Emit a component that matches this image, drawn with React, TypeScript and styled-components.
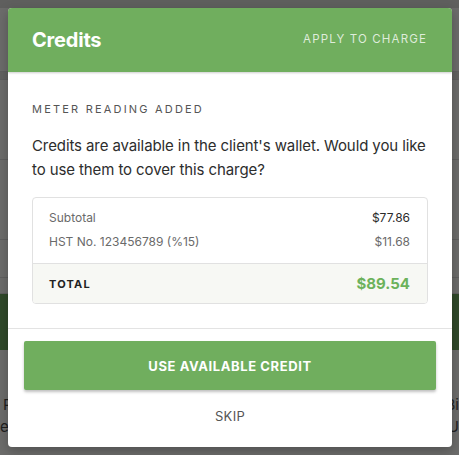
import React from "react";
import styled, { createGlobalStyle } from "styled-components";

const GlobalStyle = createGlobalStyle`
    html, body {
        margin: 0;
        padding: 0;
        width: 459px;
        height: 455px;
        overflow: hidden;
        font-family: Inter, "Liberation Sans", Arial, sans-serif;
    }
    * { box-sizing: border-box; }
`;

// Dimmed page behind the dialog
const Backdrop = styled.div`
    position: relative;
    width: 459px;
    height: 455px;
    background: #6c6c6b;
    display: flex;
    flex-direction: column;
`;

const PageTopBar = styled.div`
    height: 8px;
    flex-shrink: 0;
    background: #5f5f5e;
`;

const PageRow = styled.div<{ $height: number; $dark?: boolean }>`
    height: ${props => props.$height}px;
    flex-shrink: 0;
    border-bottom: 1px solid #5f5f5f;
    background: ${props => (props.$dark ? "#626261" : "transparent")};
`;

const PageBanner = styled.div`
    height: 56px;
    flex-shrink: 0;
    background: #30492a;
`;

const PageText = styled.div`
    display: flex;
    justify-content: space-between;
    padding-top: 44px;
    font-size: 15px;
    line-height: 22px;
    color: #1f1f1f;
`;

const PageTextCol = styled.div<{ $right?: boolean }>`
    display: flex;
    flex-direction: column;
    align-items: ${props => (props.$right ? "flex-end" : "flex-start")};
`;

const PageWord = styled.span<{ $indent?: number }>`
    margin-left: ${props => props.$indent || 0}px;
`;

// Dialog
const Overlay = styled.div`
    position: absolute;
    inset: 0;
    padding: 8px 7px 8px 8px;
    display: flex;
    align-items: flex-start;
`;

const Dialog = styled.div`
    width: 444px;
    height: 439px;
    background: #ffffff;
    border-radius: 4px;
    overflow: hidden;
    display: flex;
    flex-direction: column;
    box-shadow: 0 4px 12px rgba(0, 0, 0, 0.25);
`;

const Header = styled.div`
    height: 64px;
    flex-shrink: 0;
    background: #70ae5e;
    display: flex;
    align-items: center;
    justify-content: space-between;
    padding: 0 25px 0 24px;
    box-shadow: 0 1px 2px rgba(0, 0, 0, 0.2);
    position: relative;
    z-index: 1;
`;

const Title = styled.h1`
    margin: 0;
    font-size: 20px;
    font-weight: 700;
    color: #ffffff;
    letter-spacing: -0.2px;
`;

const HeaderAction = styled.span`
    font-size: 11.5px;
    letter-spacing: 1.15px;
    color: rgba(255, 255, 255, 0.78);
    text-transform: uppercase;
    margin-top: -2px;
`;

const Body = styled.div`
    padding: 30px 24px 24px 24px;
    border-bottom: 1px solid #e3e3e3;
`;

const Eyebrow = styled.div`
    font-size: 11px;
    letter-spacing: 2.2px;
    color: #555555;
    line-height: 14px;
    text-transform: uppercase;
`;

const Message = styled.p`
    margin: 18px 0 15px 0;
    font-size: 15px;
    line-height: 24px;
    color: #2d2d2d;
    letter-spacing: -0.1px;
`;

const Summary = styled.div`
    border: 1px solid #e1e1e1;
    border-radius: 4px;
    overflow: hidden;
`;

const SummaryLines = styled.div`
    padding: 8px 17px 9px 16px;
    display: flex;
    flex-direction: column;
`;

const Line = styled.div`
    display: flex;
    justify-content: space-between;
    font-size: 12px;
    line-height: 24px;
    color: #6a6a6a;
`;

const LineValue = styled.span<{ $strong?: boolean }>`
    color: ${props => (props.$strong ? "#2b2b2b" : "#6a6a6a")};
`;

const TotalRow = styled.div`
    height: 40px;
    border-top: 1px solid #e1e1e1;
    background: #f7f8f4;
    display: flex;
    align-items: center;
    justify-content: space-between;
    padding: 0 17px 0 16px;
`;

const TotalLabel = styled.span`
    font-size: 11px;
    font-weight: 700;
    letter-spacing: 1.2px;
    color: #222222;
`;

const TotalValue = styled.span`
    font-size: 15px;
    font-weight: 700;
    color: #6cb25b;
`;

const Footer = styled.div`
    padding: 12px 16px 0 16px;
    display: flex;
    flex-direction: column;
    align-items: stretch;
`;

const PrimaryButton = styled.button`
    height: 49px;
    border: none;
    border-radius: 2px;
    background: #70ae5e;
    color: #ffffff;
    font-family: inherit;
    font-size: 13px;
    font-weight: 700;
    letter-spacing: 0.6px;
    text-transform: uppercase;
    box-shadow: 0 2px 3px rgba(0, 0, 0, 0.25);
    cursor: pointer;
`;

const TextButton = styled.button`
    margin-top: 12px;
    height: 28px;
    border: none;
    background: transparent;
    color: #555555;
    font-family: inherit;
    font-size: 13px;
    letter-spacing: 0.3px;
    text-transform: uppercase;
    cursor: pointer;
`;

export default function App() {
    return (
        <>
            <GlobalStyle />
            <Backdrop>
                <PageTopBar />
                <PageRow $height={64} />
                <PageRow $height={8} $dark />
                <PageRow $height={80} />
                <PageRow $height={80} />
                <PageRow $height={38} />
                <PageRow $height={16} />
                <PageBanner />
                <PageText>
                    <PageTextCol>
                        <PageWord $indent={3}>P</PageWord>
                        <PageWord>ea</PageWord>
                    </PageTextCol>
                    <PageTextCol $right>
                        <PageWord>Bi</PageWord>
                        <PageWord>U</PageWord>
                    </PageTextCol>
                </PageText>
                <Overlay>
                    <Dialog>
                        <Header>
                            <Title>Credits</Title>
                            <HeaderAction>Apply to charge</HeaderAction>
                        </Header>
                        <Body>
                            <Eyebrow>Meter reading added</Eyebrow>
                            <Message>
                                Credits are available in the client's wallet. Would you like to use them to cover this charge?
                            </Message>
                            <Summary>
                                <SummaryLines>
                                    <Line>
                                        <span>Subtotal</span>
                                        <LineValue $strong>$77.86</LineValue>
                                    </Line>
                                    <Line>
                                        <span>HST No. 123456789 (%15)</span>
                                        <LineValue>$11.68</LineValue>
                                    </Line>
                                </SummaryLines>
                                <TotalRow>
                                    <TotalLabel>TOTAL</TotalLabel>
                                    <TotalValue>$89.54</TotalValue>
                                </TotalRow>
                            </Summary>
                        </Body>
                        <Footer>
                            <PrimaryButton>Use available credit</PrimaryButton>
                            <TextButton>Skip</TextButton>
                        </Footer>
                    </Dialog>
                </Overlay>
            </Backdrop>
        </>
    );
}
